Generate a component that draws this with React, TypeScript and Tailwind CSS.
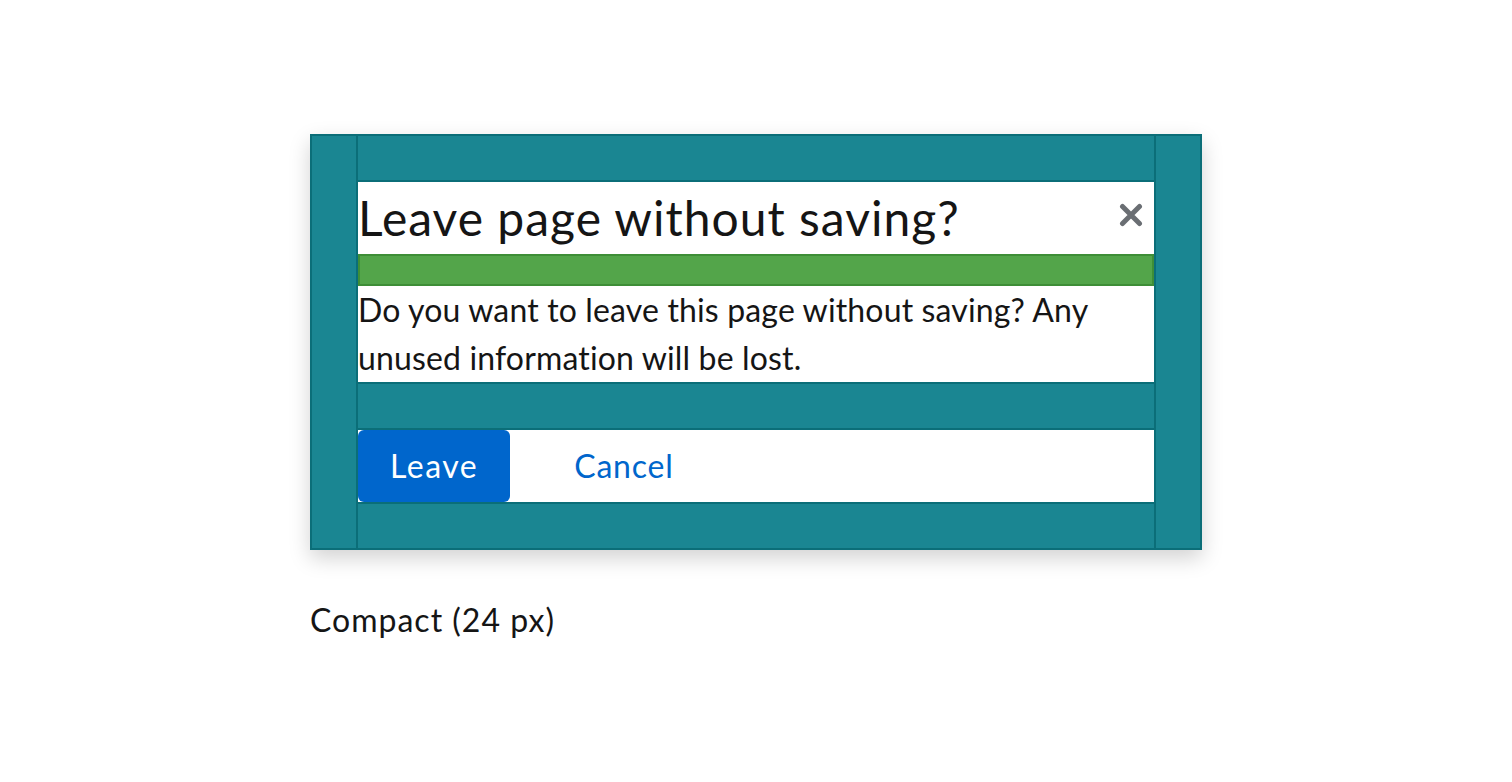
const font = { fontFamily: "Lato, 'Open Sans', sans-serif" };

const CloseIcon = () => (
  <svg width="24" height="24" viewBox="0 0 24 24" aria-hidden="true">
    <path
      d="M3.5 3.5 L20.5 20.5 M20.5 3.5 L3.5 20.5"
      stroke="#6a6e73"
      strokeWidth="5"
      strokeLinecap="round"
      fill="none"
    />
  </svg>
);

const Pad = ({ className = "" }: { className?: string }) => (
  <div className={`bg-[#1a8692] border-[#0b6e78] ${className}`} />
);

export default function App() {
  return (
    <div className="min-h-screen bg-white text-[#151515]" style={font}>
      <div className="mx-auto w-[892px] pt-[134px]">
        <div className="flex border-2 border-[#0b6e78] bg-[#1a8692] shadow-[0_8px_20px_rgba(0,0,0,0.18)]">
          <Pad className="w-[46px] border-r-2" />
          <div className="flex w-[796px] flex-col">
            <Pad className="h-[46px] border-b-2" />
            <div className="flex h-[72px] items-center justify-between bg-white pr-[11px]">
              <h1 className="text-[48px] leading-[72px] font-normal tracking-[1px]">
                Leave page without saving?
              </h1>
              <div className="-mt-[6px]">
                <CloseIcon />
              </div>
            </div>
            <div className="h-[32px] border-2 border-[#3e8e37] bg-[#53a54a]" />
            <div className="bg-white text-[32px] leading-[48px] tracking-[0.15px]">
              Do you want to leave this page without saving? Any unused information will be lost.
            </div>
            <Pad className="h-[48px] border-y-2" />
            <div className="flex h-[72px] items-center gap-[32px] bg-white">
              <button className="h-[72px] rounded-[6px] bg-[#0066cc] px-[32px] text-[32px] tracking-[1.5px] text-white">
                Leave
              </button>
              <button className="h-[72px] px-[32px] text-[32px] tracking-[0.8px] text-[#0066cc]">
                Cancel
              </button>
            </div>
            <Pad className="h-[46px] border-t-2" />
          </div>
          <Pad className="w-[46px] border-l-2" />
        </div>
        <p className="mt-[46px] text-[32px] leading-[48px] tracking-[1px]">Compact (24 px)</p>
      </div>
    </div>
  );
}
